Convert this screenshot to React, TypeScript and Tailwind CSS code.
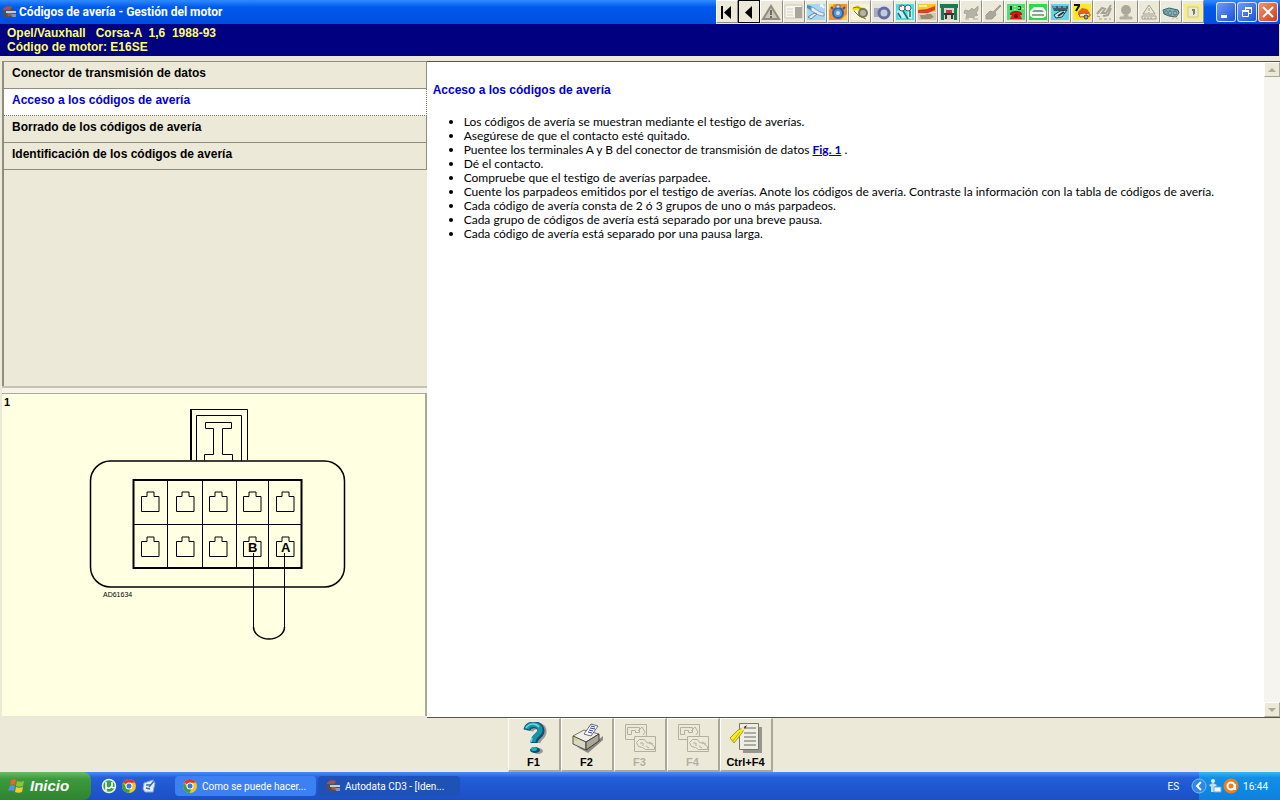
import type { ReactNode } from 'react'
import clsx from 'clsx'

const grey = '#8f8d80'

// Drawn on a 20x20 grid, in toolbar order
const toolbarItems: { label: string; icon: ReactNode; focused?: boolean; disabled?: boolean }[] = [
    {
        label: 'Inicio de la lista',
        icon: <path d="M4 4h2v13H4zM14 4v13L7 10.5z" fill="#000" />,
    },
    {
        label: 'Anterior',
        focused: true,
        icon: <path d="M13 4v13L6 10.5z" fill="#000" />,
    },
    {
        label: 'Avisos',
        disabled: true,
        icon: (
            <g>
                <path d="M10 4 18 17H2z" fill="#c9c7bb" stroke={grey} strokeWidth="2" />
                <path d="M9 8h2v5H9zM9 14h2v2H9z" fill="#6f6d62" />
            </g>
        ),
    },
    {
        label: 'Datos generales',
        disabled: true,
        icon: (
            <g>
                <path d="M1 3h17v13H1z" fill="#f7f6ef" stroke="#c9c7bb" />
                <path d="M11 5h7v11h-7z" fill="#a9a79c" />
                <path d="M3 7h6M3 10h6M3 13h6" stroke="#d0cec2" />
            </g>
        ),
    },
    {
        label: 'Datos técnicos',
        icon: (
            <g>
                <path d="M1 2h18v16H1z" fill="#a5d8f2" />
                <path d="M1 3 5 4l7 6-3 1L1 6z" fill="#4a8fbe" />
                <path d="M5 5c4 0 6 5 13 6v3c-7 0-9-4-13-5z" fill="#e3eef4" stroke="#7d9cb4" />
                <path d="M2 15 8 11l3 1-6 5z" fill="#dfe5e8" stroke="#6c8496" />
                <path d="M14 4l2-1 2 3" stroke="#fff" strokeWidth="2" fill="none" />
            </g>
        ),
    },
    {
        label: 'Distribución',
        icon: (
            <g>
                <path d="M1 2h18v16H1z" fill="#f78f2a" />
                <path d="M1 2h5L1 8zM19 18h-6l6-6z" fill="#ffd23a" />
                <circle cx="10" cy="11" r="5" fill="#5b97cf" stroke="#2a63ab" strokeWidth="2" />
                <circle cx="10" cy="11" r="2" fill="#c8dbe6" />
                <path d="M8 3h4v3H8z" fill="#d9e6ee" stroke="#5c7488" />
                <path d="M5 7 3 5M15 7l2-2" stroke="#2a63ab" strokeWidth="2" />
            </g>
        ),
    },
    {
        label: 'Correas',
        icon: (
            <g>
                <path d="M1 2h18v16H1z" fill="#f5f3dc" />
                <path d="M2 6l6-3 3 2 4 1-3 3-5-1-4 1z" fill="#f1de17" />
                <circle cx="13" cy="11" r="4" fill="#b5b3a4" stroke="#77755e" strokeWidth="2" />
                <path d="M3 6 7 5l5 2M4 9l5 5 7 3" stroke="#7f772e" fill="none" />
            </g>
        ),
    },
    {
        label: 'Neumáticos',
        icon: (
            <g>
                <path d="M1 2h18v16H1z" fill="#e2e3e6" />
                <path d="M2 6h9v9H2z" fill="#a7abc0" />
                <circle cx="12" cy="11" r="5" fill="#c3cbdf" stroke="#646d9c" strokeWidth="3" />
            </g>
        ),
    },
    {
        label: 'Mantenimiento',
        icon: (
            <g>
                <path d="M1 2h18v16H1z" fill="#49dfe6" />
                <path d="M2 9l5-2 4 9H4zM12 7h5v10l-4-1z" fill="#c4f0f2" />
                <circle cx="7" cy="6" r="3" fill="#f3f6f2" stroke="#3a6e72" />
                <circle cx="13" cy="6" r="3" fill="#f3f6f2" stroke="#3a6e72" />
                <path d="M8 9l5 8M15 9v6M3 11l3 5" stroke="#246870" strokeWidth="1.500" />
                <path d="M4 3h3v2H4z" fill="#de5d52" />
            </g>
        ),
    },
    {
        label: 'Aire acondicionado',
        icon: (
            <g>
                <path d="M1 2h18v8H1z" fill="#f9c62f" />
                <path d="M1 11h18v7H1z" fill="#d5cbb4" />
                <path d="M1 8 10 7l8-3v4l-7 3H1z" fill="#d9421f" />
                <path d="M3 13h5l2-1h4l3 3-4 2H4z" fill="#9b8b73" />
                <path d="M2 4h8" stroke="#fdf1a0" strokeWidth="2" />
            </g>
        ),
    },
    {
        label: 'Elevador',
        icon: (
            <g>
                <path d="M1 2h18v16H1z" fill="#d9d7ca" />
                <path d="M1 2h18v4H1zM2 6h3v12H2zM15 6h3v12h-3z" fill="#1b7a56" />
                <path d="M7 8h6v3H7z" fill="#b04343" />
                <path d="M5 11h10v2H5zM6 13h2v4H6zM12 13h2v4h-2z" fill="#2e3a34" />
            </g>
        ),
    },
    {
        label: 'Inyección',
        disabled: true,
        icon: (
            <path
                d="M4 8l4 1 3-3 2 2 4-4v4l-2 3 2 2-4 1v2l-4-1-4 1 1-4-3-1zM4 17h4M12 17h5"
                fill="#b5b3a6"
                stroke="#a9a79b"
            />
        ),
    },
    {
        label: 'Bujías',
        disabled: true,
        icon: <path d="M18 4l-6 6 1 3-4 4H3v-4l4-4 3 1 7-7z" fill="#aaa89b" stroke="#a09e93" />,
    },
    {
        label: 'Códigos de avería',
        icon: (
            <g>
                <path d="M1 2h18v16H1z" fill="#45e27a" />
                <path d="M4 4h2v4H4zM12 4h3v1h-3zM14 5h1v3h-1zM12 7h2v1h-2z" fill="#22301a" />
                <path d="M4 12c0-4 12-4 12 0v1h-3v-1H7v1H4z" fill="#c81010" />
                <path d="M7 11h6l3 6H4z" fill="#e01919" />
                <circle cx="10" cy="14" r="2" fill="#7a0909" />
                <path d="M8 4h2v1H8zM8 7h2v1H8zM16 6h2v1h-2z" fill="#f2e640" />
            </g>
        ),
    },
    {
        label: 'Localización',
        icon: (
            <g>
                <path d="M1 2h18v16H1z" fill="#2fd84f" />
                <path d="M6 5h9l3 4v5l-3 2H5l-3-2V9z" fill="#f3f8f3" />
                <path d="M6 8h8l2 2H4z" fill="#7f9c86" />
                <path d="M4 13h12" stroke="#8aa892" strokeWidth="2" />
            </g>
        ),
    },
    {
        label: 'Esquemas',
        icon: (
            <g>
                <path d="M1 2h18v16H1z" fill="#63d6e4" />
                <path d="M2 4h16v3l-5 2H4z" fill="#35636d" />
                <path d="M4 13 10 9l7-1-5 7-6 1z" fill="#cfe3e6" stroke="#1d3a48" />
                <path d="M3 5h3M8 5h3M13 5h3" stroke="#9fd3da" />
                <path d="M8 14l6-4" stroke="#1d3a48" strokeWidth="2" />
            </g>
        ),
    },
    {
        label: 'Diagnóstico',
        icon: (
            <g>
                <path d="M1 2h18v16H1z" fill="#fbe827" />
                <path d="M2 3h5v1L4 9" stroke="#111" strokeWidth="2" fill="none" />
                <path d="M6 10l4-4 5 1 3 4-5 1-7 1z" fill="#e3661d" />
                <path d="M7 12l5-1 6 1v2l-10 1z" fill="#f7e8d3" stroke="#b2551a" />
                <circle cx="14" cy="15" r="2" fill="#9d9d9d" stroke="#444" />
            </g>
        ),
    },
    {
        label: 'Componentes',
        disabled: true,
        icon: (
            <g fill="none" stroke="#a5a397" strokeWidth="2">
                <path d="M3 12l5-6 3 1-3 4h4l5-8M17 6l-3 7-5 1" />
                <path d="M5 17h3M10 17h3M15 17h2M3 14l3 1" strokeWidth="1" />
            </g>
        ),
    },
    {
        label: 'Testigo',
        disabled: true,
        icon: (
            <g>
                <circle cx="10" cy="8" r="5" fill="#aaa89b" />
                <path d="M8 13h4v2H8zM4 15h12v2H4z" fill="#b5b3a7" stroke="#b0aea2" />
            </g>
        ),
    },
    {
        label: 'Airbag',
        disabled: true,
        icon: (
            <g fill="none" stroke="#a09e93">
                <path d="M10 3 16 12H4zM10 6v3M10 10v1" />
                <path d="M3 14h14v3H3zM6 15v2M9 15v2M12 15v2" />
            </g>
        ),
    },
    {
        label: 'ABS',
        icon: (
            <g>
                <path d="M1 2h18v16H1z" fill="#e9ebe0" />
                <path d="M2 8l6-2 9 2 1 3-3 4-7-1-5-2z" fill="#7fb0b9" stroke="#41656c" />
                <path d="M4 9h2v3H4zM8 9h2v4H8zM13 9h2v4h-2z" fill="#dce9e9" stroke="#4a7078" />
                <path d="M11 17l3-2 3 2" fill="none" stroke="#c5ba77" />
            </g>
        ),
    },
    {
        label: 'Bloqueo',
        icon: (
            <g>
                <path d="M1 2h18v16H1z" fill="#f4ee89" />
                <path d="M5 5h10v10H5z" fill="#eceada" stroke="#cbc890" />
                <path d="M9 7h3v5h-1v1h-1V9H9z" fill="#7c7c72" />
            </g>
        ),
    },
]

const topics = [
    'Conector de transmisión de datos',
    'Acceso a los códigos de avería',
    'Borrado de los códigos de avería',
    'Identificación de los códigos de avería',
]

const steps: ReactNode[] = [
    'Los códigos de avería se muestran mediante el testigo de averías.',
    'Asegúrese de que el contacto esté quitado.',
    <>
        Puentee los terminales A y B del conector de transmisión de datos{' '}
        <a href="#fig1" className="font-bold text-[#0000c0] underline">Fig. 1</a> .
    </>,
    'Dé el contacto.',
    'Compruebe que el testigo de averías parpadee.',
    'Cuente los parpadeos emitidos por el testigo de averías. Anote los códigos de avería. Contraste la información con la tabla de códigos de avería.',
    'Cada código de avería consta de 2 ó 3 grupos de uno o más parpadeos.',
    'Cada grupo de códigos de avería está separado por una breve pausa.',
    'Cada código de avería está separado por una pausa larga.',
]

function AutodataIcon() {
    return (
        <svg viewBox="0 0 16 16" className="size-4 shrink-0" aria-hidden="true">
            <circle cx="7" cy="8" r="6" fill="#4b4f63" />
            <path d="M2 5a7 7 0 0 1 9-2L9 6H2z" fill="#a0525c" />
            <path d="M5 7h10v2H5z" fill="#c3cce0" />
            <path d="M6 9h5l-1 3H7z" fill="#c54835" />
            <path d="M10 10h5v3h-4z" fill="#7d93c0" />
        </svg>
    )
}

function ChromeIcon({ className }: { className: string }) {
    return (
        <svg viewBox="0 0 16 16" className={className} aria-hidden="true">
            <circle cx="8" cy="8" r="7" fill="#f4c61f" />
            <path d="M8 8 2 4.500A7 7 0 0 1 14 4.500L8 5z" fill="#d93a2b" />
            <path d="M2 4.500A7 7 0 0 0 7.500 15L10 10 5 9z" fill="#39a04a" />
            <circle cx="8" cy="8" r="3.500" fill="#fff" />
            <circle cx="8" cy="8" r="2.500" fill="#3c78d8" />
        </svg>
    )
}

function TitleBar() {
    const windowButton =
        'flex h-5 w-5 items-center justify-center rounded-[3px] border border-white/80 bg-gradient-to-br from-[#6f9cf5] to-[#1c4fd8]'
    return (
        <header className="flex h-6 shrink-0 items-center bg-gradient-to-b from-[#2f8bff] via-[#0058ec] via-30% to-[#0050e0] pl-px">
            <AutodataIcon />
            <h1 className="ml-0.5 flex-1 truncate font-['Roboto',sans-serif] text-[12px] font-bold text-white">
                Códigos de avería - Gestión del motor
            </h1>
            <div className="flex h-full w-[488px] shrink-0 bg-[#ece9d8] pb-px">
                {toolbarItems.map((item) => (
                    <button
                        key={item.label}
                        type="button"
                        aria-label={item.label}
                        disabled={item.disabled}
                        className={clsx(
                            'flex min-w-0 flex-1 items-center justify-center border',
                            item.focused
                                ? 'border-black'
                                : 'border-t-white border-r-[#8f8d80] border-b-[#8f8d80] border-l-white',
                        )}
                    >
                        <svg viewBox="0 0 20 20" className="size-5 shrink-0">{item.icon}</svg>
                    </button>
                ))}
            </div>
            <div className="ml-3 flex shrink-0 gap-px pr-0.5">
                <button type="button" aria-label="Minimizar" className={windowButton}>
                    <svg viewBox="0 0 16 16" className="size-4"><path d="M3 11h6v3H3z" fill="#fff" /></svg>
                </button>
                <button type="button" aria-label="Restaurar" className={windowButton}>
                    <svg viewBox="0 0 16 16" className="size-4" fill="none" stroke="#fff">
                        <path d="M6.500 6V3.500h6v6H10" />
                        <path d="M6 4h7M3 7h7" strokeWidth="2" />
                        <path d="M3.500 6.500h6v6h-6z" />
                    </svg>
                </button>
                <button
                    type="button"
                    aria-label="Cerrar"
                    className="flex h-5 w-5 items-center justify-center rounded-[3px] border border-white/80 bg-gradient-to-br from-[#ee9273] to-[#cf3a12]"
                >
                    <svg viewBox="0 0 16 16" className="size-4">
                        <path d="M3 3l10 10M13 3 3 13" stroke="#fff" strokeWidth="2" />
                    </svg>
                </button>
            </div>
        </header>
    )
}

const columnX = [150, 185, 218, 252, 285]
const rowY = [492, 537]

function ConnectorFigure() {
    return (
        <svg
            viewBox="85 405 265 240"
            className="mt-[11px] ml-[67px] h-60 w-[265px] shrink-0"
            fill="none"
            stroke="#000"
            role="img"
            aria-label="Conector de transmisión de datos"
        >
            <path d="M190.500 460V409.500H247.500V460" />
            <path d="M191 460V409" strokeWidth="2" />
            <path d="M196.500 461V415.500H241.500V461M205.500 422.500h26v6h-9v26h10v6M205.500 422.500v6h8v26h-9v6" />
            <rect x="90.500" y="461" width="254" height="126" rx="20" strokeWidth="1.500" />
            <rect x="133.500" y="480" width="168" height="88" strokeWidth="2" />
            <path d="M167.500 480v88M202.500 480v88M236.500 480v88M268.500 480v88M134 524.500h168" />
            {rowY.map((y) =>
                columnX.map((x) => (
                    <path
                        key={`${x}-${y}`}
                        d={`M${x - 8.5} ${y + 19.5}v-15h5.500v-4.500h7v4.500h5v15z`}
                        strokeWidth="1"
                    />
                )),
            )}
            <path d="M253.500 553v75M284.500 553v75" />
            <path d="M253.500 627a15.500 12 0 0 0 31 0" strokeWidth="1.500" />
            <g fill="#000" stroke="none" fontWeight="700">
                <text x="248" y="552" fontSize="13">B</text>
                <text x="281" y="552" fontSize="13">A</text>
                <text x="103" y="597" fontSize="7" fontWeight="400">AD61634</text>
            </g>
        </svg>
    )
}

function LeftPane() {
    return (
        <div className="flex w-1/3 shrink-0 flex-col pl-0.5">
            <nav className="flex-1 border-t border-l-2 border-[#8f8d80]">
                {topics.map((topic, i) => (
                    <button
                        key={topic}
                        type="button"
                        className={clsx(
                            'flex h-[27px] w-full items-start border-r border-b px-2 pt-[3px] text-left text-[12px] leading-4 font-bold',
                            i === 1
                                ? 'border-dotted border-[#77754a] bg-white text-[#0000d0]'
                                : 'border-[#8f8d80] bg-[#ece9d8] text-black',
                        )}
                    >
                        {topic}
                    </button>
                ))}
            </nav>
            <div className="h-2 shrink-0 border-t-2 border-b border-t-[#c5c2b4] border-b-[#aca899] bg-[#f5f3ea]" />
            <section className="flex h-[322px] shrink-0 items-start border-r-2 border-[#aca899] bg-[#ffffe1]">
                <span className="w-4 pl-0.5 text-[11px] leading-4 font-bold">1</span>
                <ConnectorFigure />
            </section>
            <div className="h-0.5 shrink-0" />
        </div>
    )
}

function ScrollBar() {
    const arrow =
        'flex h-[15px] items-center justify-center border border-t-white border-r-[#aca899] border-b-[#aca899] border-l-white bg-[#ece9d8]'
    return (
        <div className="flex w-4 shrink-0 flex-col justify-between bg-[#f5f4ee]">
            <button type="button" aria-label="Subir" className={arrow}>
                <svg viewBox="0 0 8 8" className="size-2"><path d="M0 6h8L4 2z" fill="#aca899" /></svg>
            </button>
            <button type="button" aria-label="Bajar" className={arrow}>
                <svg viewBox="0 0 8 8" className="size-2"><path d="M0 2h8L4 6z" fill="#aca899" /></svg>
            </button>
        </div>
    )
}

// Two stacked pictures, greyed out
function PicturesIcon() {
    return (
        <svg viewBox="0 0 32 32" className="size-8 shrink-0" fill="none" stroke="#b3b0a2">
            <path d="M1.500 2.500h21v15h-21z" />
            <path d="M3.500 5.500h12v5h-4v-2h-4v4h-4zM14 9l4-4 3 5-2 3" />
            <path d="M10.500 14.500h21v15h-21z" fill="#ece9d8" />
            <path d="M12.500 20.500l3-3h5l2 3 4 1 4 3v3h-9l-3-2-4-1zM16 21h3v3M22 24l3 2M25 20l4 2" />
        </svg>
    )
}

const functionKeys: { label: string; icon: ReactNode; disabled?: boolean }[] = [
    {
        label: 'F1',
        icon: (
            <svg viewBox="0 0 32 32" className="size-8 shrink-0" fill="none">
                <path d="M12 9c1-7 14-7 13 1 0 5-6 5-6 11" stroke="#9a9893" strokeWidth="7" />
                <ellipse cx="20" cy="29" rx="5" ry="3" fill="#9a9893" />
                <path d="M9 8c1-7 14-7 14 1 0 5-7 5-7 12" stroke="#0d4f75" strokeWidth="7" />
                <path d="M9 7c1-6 13-6 13 1 0 5-7 5-7 12" stroke="#1794ac" strokeWidth="5" />
                <path d="M8 6c3-5 10-5 13-1M14 16l-1 4" stroke="#6fdbe2" strokeWidth="1.500" />
                <ellipse cx="17" cy="28" rx="5" ry="3" fill="#0d4f75" />
                <ellipse cx="16" cy="27" rx="3" ry="2" fill="#1bb0bf" />
            </svg>
        ),
    },
    {
        label: 'F2',
        icon: (
            <svg viewBox="0 0 32 32" className="size-8 shrink-0">
                <path d="M6 25 17 31 32 18V14L16 27z" fill="#8b8982" />
                <path d="M2 14 13 8 28 12 15 20z" fill="#f1f0e6" stroke="#77756b" />
                <path d="M2 14v8l13 6v-8z" fill="#d9d7c9" stroke="#55534c" />
                <path d="M15 20 28 12v7L15 28z" fill="#a9a79a" stroke="#3d3b36" />
                <path d="M13 12 20 2 27 4 20 14z" fill="#fff" stroke="#6a6a80" />
                <path d="M19 6l5 1M18 8l4 1M17 10l4 1M20 4l4 1" stroke="#2d3f9b" />
                <path d="M3 16l3 1v2l-3-1z" fill="#d9dc3c" />
            </svg>
        ),
    },
    { label: 'F3', icon: <PicturesIcon />, disabled: true },
    { label: 'F4', icon: <PicturesIcon />, disabled: true },
    {
        label: 'Ctrl+F4',
        icon: (
            <svg viewBox="0 0 32 32" className="size-8 shrink-0">
                <path d="M13 5h19v26H13z" fill="#99978d" />
                <path d="M9.500 1.500h19v26h-19z" fill="#efeee4" stroke="#77756c" />
                <path d="M15 6h11M14 11h12M14 15h12M14 19h12M14 23h12" stroke="#6b6960" />
                <path d="M0 16 8 8l7-3-3 6-8 10z" fill="#f5ec18" stroke="#a39c2c" />
                <path d="M3 19l7-9" stroke="#b9b01c" />
                <path d="M11 6l5-2-3 5z" fill="#f4e3c0" />
                <path d="M14 5l3-2-2 4z" fill="#222" />
            </svg>
        ),
    },
]

function FunctionBar() {
    return (
        <div className="flex h-[54px] shrink-0 justify-center">
            {functionKeys.map((key) => (
                <button
                    key={key.label}
                    type="button"
                    disabled={key.disabled}
                    className="flex w-[53px] flex-col items-center border-t border-r-2 border-b-2 border-l border-t-white border-r-[#aca899] border-b-[#aca899] border-l-white pt-[3px] text-[11px] leading-4 font-bold text-black disabled:text-[#b3b0a2]"
                >
                    {key.icon}
                    {key.label}
                </button>
            ))}
        </div>
    )
}

function Taskbar() {
    return (
        <footer className="flex h-7 shrink-0 items-stretch bg-gradient-to-b from-[#4a8df5] via-[#245edb] via-20% to-[#1c4fc4] font-['Roboto',sans-serif] text-[10px] text-white">
            <button
                type="button"
                className="flex w-[91px] items-center gap-1 rounded-r-lg bg-gradient-to-b from-[#6cbb64] via-[#3c9a3c] via-25% to-[#2f8430] pl-2 font-['Liberation_Sans',sans-serif] text-[15px] font-bold italic"
            >
                <svg viewBox="0 0 18 18" className="size-[18px]" aria-hidden="true">
                    <path d="M3 3c2-1 4-1 5 0L7 8c-2-1-3-1-5 0z" fill="#ec6330" />
                    <path d="M9 4c2 1 4 1 7 0l-1 5c-2 1-5 1-7 0z" fill="#85c63d" />
                    <path d="M2 9c2-1 3-1 5 0l-1 5c-2-1-4-1-6 0z" fill="#5b8eef" />
                    <path d="M8 10c2 1 4 1 7 0l-1 5c-2 1-5 1-7 0z" fill="#f8c92f" />
                </svg>
                Inicio
            </button>
            <div className="ml-[10px] flex items-center gap-1">
                <button type="button" aria-label="uTorrent">
                    <svg viewBox="0 0 16 16" className="size-4">
                        <circle cx="8" cy="8" r="6.500" fill="#3c9d4f" stroke="#e8f5e8" strokeWidth="1.500" />
                        <path d="M5 4v5q3 3 6-1V4M5 8v5M11 8q0 3 3 1" stroke="#fff" strokeWidth="1.500" fill="none" />
                    </svg>
                </button>
                <button type="button" aria-label="Chrome">
                    <ChromeIcon className="size-4" />
                </button>
                <button type="button" aria-label="Mostrar escritorio">
                    <svg viewBox="0 0 16 16" className="size-4">
                        <path d="M3 5l9-3 2 3-2 9H4l-2-3z" fill="#e6eefa" stroke="#7fa6dc" />
                        <path d="M5 7h5M5 10l4 1M8 9l5-6" stroke="#3a6ea5" strokeWidth="1.500" />
                    </svg>
                </button>
            </div>
            <div className="ml-[18px] flex flex-1 gap-0.5 py-1">
                <button
                    type="button"
                    className="flex w-[141px] items-center gap-1 rounded-sm bg-[#3c81f3] pl-[7px]"
                >
                    <ChromeIcon className="size-4 shrink-0" />
                    <span className="whitespace-nowrap">Como se puede hacer...</span>
                </button>
                <button
                    type="button"
                    aria-pressed="true"
                    className="flex w-[142px] items-center gap-1 rounded-sm bg-[#1e52b7] pl-[7px]"
                >
                    <AutodataIcon />
                    <span className="whitespace-nowrap">Autodata CD3 - [Iden...</span>
                </button>
            </div>
            <span className="flex items-center pr-5">ES</span>
            <div className="flex items-center bg-gradient-to-b from-[#3ab4f8] via-[#1290e9] via-20% to-[#0f80dc] pr-3">
                <button type="button" aria-label="Mostrar iconos ocultos" className="-ml-2">
                    <svg viewBox="0 0 16 16" className="size-4">
                        <circle cx="8" cy="8" r="7" fill="#2f86ea" stroke="#7cc0f8" />
                        <path d="M10 4 6 8l4 4" fill="none" stroke="#fff" strokeWidth="2" />
                    </svg>
                </button>
                <svg viewBox="0 0 16 16" className="size-4" aria-hidden="true">
                    <circle cx="6" cy="3" r="2" fill="#dff1ff" />
                    <path d="M2 7l4-2 4 2-2 2v5H4V9z" fill="#bfe0fa" />
                    <path d="M7 9h7v5H7z" fill="#eef6fc" stroke="#7ba7cc" />
                </svg>
                <svg viewBox="0 0 16 16" className="size-4" aria-hidden="true">
                    <circle cx="8" cy="8" r="7.500" fill="#ef7d1a" />
                    <circle cx="8" cy="8" r="3.500" fill="none" stroke="#fff" strokeWidth="2" />
                    <path d="M12 6v6" stroke="#fff" strokeWidth="2" />
                </svg>
                <time className="ml-1">16:44</time>
            </div>
        </footer>
    )
}

export default function App() {
    return (
        <div className="flex h-screen flex-col overflow-hidden bg-[#ece9d8] font-['Liberation_Sans',Arial,sans-serif] text-black">
            <TitleBar />
            <div className="mr-px h-8 shrink-0 bg-[#000080] pt-0.5 pl-[7px] text-[12px] leading-[14px] font-bold whitespace-pre text-[#ffff66]">
                <p>{'Opel/Vauxhall   Corsa-A  1,6  1988-93'}</p>
                <p>Código de motor: E16SE</p>
            </div>
            <main className="flex min-h-0 flex-1 pt-[5px]">
                <LeftPane />
                <div className="flex min-w-0 flex-1 border-t border-b border-[#55534c] bg-white">
                    <article className="flex-1 pt-5 pl-1.5 text-[12px] leading-[14px]">
                        <h2 className="mt-px font-bold text-[#0000d0]">Acceso a los códigos de avería</h2>
                        <ul className="mt-[18px] list-disc pl-[31px] font-['Lato',sans-serif]">
                            {steps.map((step, i) => (
                                <li key={i}>{step}</li>
                            ))}
                        </ul>
                    </article>
                    <ScrollBar />
                </div>
            </main>
            <FunctionBar />
            <Taskbar />
        </div>
    )
}
